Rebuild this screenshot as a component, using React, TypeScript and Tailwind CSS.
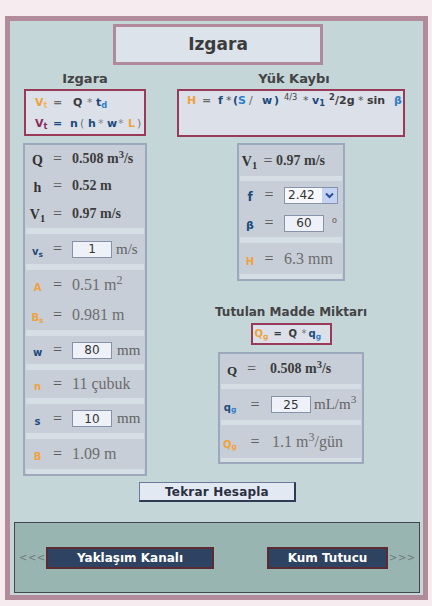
import React from "react";

const SANS = "font-['DejaVu_Sans',Verdana,sans-serif]";
const SERIF = "font-['Liberation_Serif','Times_New_Roman',serif]";

const ORANGE = "text-[#efa23b]";
const NAVY = "text-[#1d4a7b]";
const SKY = "text-[#2f7dc6]";
const MAROON = "text-[#8a2b55]";
const DARK = "text-[#3a3a3a]";

const EQ = `${SERIF} text-[16px] text-[#5c5c5c]`;
const BOLDLBL = `${SERIF} text-[14px] font-bold text-[#333333]`;
const BOLDVAL = `${SERIF} text-[14px] font-bold text-[#3d3d3d]`;
const VAL = `${SERIF} text-[16px] text-[#6c6c6c]`;
const UNIT = `${SERIF} text-[15px] text-[#626262]`;
const OLBL = `${SANS} text-[10px] font-bold text-[#efa23b]`;
const NLBL = `${SANS} text-[10px] font-bold text-[#1d4a7b]`;

type Kids = { children?: React.ReactNode };

// Fixed-width token used inside the formula boxes
function T({ w, className, children }: { w: string; className?: string } & Kids) {
  return <span className={`inline-block ${w} ${className ?? ""}`}>{children}</span>;
}

function Panel({ className, children }: { className?: string } & Kids) {
  return <div className={`border-2 border-[#9ca8bb] bg-[#c8ced8] ${className ?? ""}`}>{children}</div>;
}

function Stripe({ h }: { h: string }) {
  return <div className={`mx-[1px] ${h} bg-[#d6dee5]`} />;
}

function Row({
  h,
  lw,
  ew,
  gap,
  label,
  children,
}: { h: string; lw: string; ew: string; gap: string; label: React.ReactNode } & Kids) {
  return (
    <div className={`flex items-center ${h}`}>
      <span className={`${lw} text-center leading-none`}>{label}</span>
      <span className={`${ew} text-center leading-none ${EQ}`}>=</span>
      <span className={`${gap} flex items-center leading-none whitespace-nowrap`}>{children}</span>
    </div>
  );
}

function LRow({ h, label, children }: { h: string; label: React.ReactNode } & Kids) {
  return (
    <Row h={h} lw="w-[25px]" ew="w-[15px]" gap="ml-[7px]" label={label}>
      {children}
    </Row>
  );
}

function Field({ value }: { value: string }) {
  return (
    <input
      readOnly
      defaultValue={value}
      className={`h-[17px] w-[40px] border border-[#8693aa] bg-[#eef2f8] text-center ${SANS} text-[12px] text-[#333] outline-none`}
    />
  );
}

function Dropdown({ value }: { value: string }) {
  return (
    <div className="flex h-[17px] w-[54px] border border-[#8693aa] bg-[#f6f8fc]">
      <span className={`flex-1 pl-[3px] ${SANS} text-[12px] leading-[15px] text-[#333]`}>{value}</span>
      <span className="flex w-[15px] items-center justify-center bg-[#c3d3f1]">
        <svg width="9" height="7" viewBox="0 0 9 7">
          <path d="M1 1.5 L4.5 5 L8 1.5" fill="none" stroke="#2f4f9c" strokeWidth="2" />
        </svg>
      </span>
    </div>
  );
}

export default function App() {
  return (
    <div className="min-h-[606px] w-[432px] bg-[#f6ecef] px-[5px] pt-[16px] pb-[6px]">
      <div className="w-[423px] border-[5px] border-[#b28b9b] bg-[#c5d6d9] pb-[2px]">
        {/* page heading */}
        <div
          className={`ml-[103px] mt-[3px] flex h-[41px] w-[210px] items-center justify-center border-[3px] border-[#b08a9b] bg-[#dce3ea] ${SANS} text-[17px] font-bold text-[#3b3b3b]`}
        >
          Izgara
        </div>

        <div className="mt-[6px] flex items-start pl-[13px]">
          {/* left column: grate dimensions */}
          <div className="w-[124px]">
            <div className={`h-[16px] text-center ${SANS} text-[13px] font-bold leading-[16px] text-[#444]`}>Izgara</div>
            <div className={`ml-[1px] mt-[2px] h-[47px] w-[122px] border-2 border-[#983a58] bg-[#dbe0e9] pt-[1px] ${SANS} text-[11px] font-bold`}>
              <div className="h-[21px] whitespace-nowrap pl-[9px] leading-[21px]">
                <T w="w-[18px]" className={ORANGE}>
                  V<sub className="text-[#f3b866]">t</sub>
                </T>
                <T w="w-[20px]" className="text-[#6a6a6a]">=</T>
                <T w="w-[14px]" className={DARK}>Q</T>
                <T w="w-[9px]" className="font-normal text-[#777]">*</T>
                <T w="w-[14px]" className={NAVY}>
                  t<sub className={SKY}>d</sub>
                </T>
              </div>
              <div className="h-[21px] whitespace-nowrap pl-[9px] leading-[21px]">
                <T w="w-[18px]" className={MAROON}>
                  V<sub>t</sub>
                </T>
                <T w="w-[17px]" className={NAVY}>=</T>
                <T w="w-[10px]" className={NAVY}>n</T>
                <T w="w-[8px]" className="font-normal text-[#777]">(</T>
                <T w="w-[10px]" className={NAVY}>h</T>
                <T w="w-[9px]" className="font-normal text-[#888]">*</T>
                <T w="w-[11px]" className={NAVY}>w</T>
                <T w="w-[10px]" className="font-normal text-[#888]">*</T>
                <T w="w-[9px]" className={ORANGE}>L</T>
                <T w="w-[5px]" className="font-normal text-[#777]">)</T>
              </div>
            </div>

            <Panel className="mt-[7px] w-[124px]">
              <LRow h="h-[28px]" label={<span className={BOLDLBL}>Q</span>}>
                <span className={BOLDVAL}>
                  0.508 m<sup>3</sup>/s
                </span>
              </LRow>
              <LRow h="h-[26px]" label={<span className={BOLDLBL}>h</span>}>
                <span className={BOLDVAL}>0.52 m</span>
              </LRow>
              <LRow
                h="h-[29px]"
                label={
                  <span className={BOLDLBL}>
                    V<sub>1</sub>
                  </span>
                }
              >
                <span className={BOLDVAL}>0.97 m/s</span>
              </LRow>
              <Stripe h="h-[6px]" />
              <LRow
                h="h-[30px]"
                label={
                  <span className={NLBL}>
                    v<sub>s</sub>
                  </span>
                }
              >
                <Field value="1" />
                <span className={`ml-[4px] ${UNIT}`}>m/s</span>
              </LRow>
              <Stripe h="h-[6px]" />
              <LRow h="h-[30px]" label={<span className={OLBL}>A</span>}>
                <span className={VAL}>
                  0.51 m<sup>2</sup>
                </span>
              </LRow>
              <LRow
                h="h-[30px]"
                label={
                  <span className={OLBL}>
                    B<sub>s</sub>
                  </span>
                }
              >
                <span className={VAL}>0.981 m</span>
              </LRow>
              <Stripe h="h-[6px]" />
              <LRow h="h-[28px]" label={<span className={NLBL}>w</span>}>
                <Field value="80" />
                <span className={`ml-[5px] ${UNIT}`}>mm</span>
              </LRow>
              <Stripe h="h-[6px]" />
              <LRow h="h-[28px]" label={<span className={OLBL}>n</span>}>
                <span className={VAL}>11 çubuk</span>
              </LRow>
              <Stripe h="h-[6px]" />
              <LRow h="h-[29px]" label={<span className={NLBL}>s</span>}>
                <Field value="10" />
                <span className={`ml-[5px] ${UNIT}`}>mm</span>
              </LRow>
              <Stripe h="h-[6px]" />
              <LRow h="h-[30px]" label={<span className={OLBL}>B</span>}>
                <span className={VAL}>1.09 m</span>
              </LRow>
              <Stripe h="h-[5px]" />
            </Panel>
          </div>

          {/* right column: head loss and retained material */}
          <div className="ml-[30px] flex w-[228px] flex-col items-center">
            <div className={`h-[16px] pl-[6px] text-center ${SANS} text-[13px] font-bold leading-[16px] text-[#444]`}>Yük Kaybı</div>
            <div className={`mt-[2px] h-[48px] w-[228px] border-2 border-[#983a58] bg-[#dbe0e9] ${SANS} text-[11px] font-bold`}>
              <div className="h-[20px] whitespace-nowrap pl-[8px] leading-[20px]">
                <T w="w-[15px]" className={ORANGE}>H</T>
                <T w="w-[16px]" className="text-[#6a6a6a]">=</T>
                <T w="w-[8px]" className={NAVY}>f</T>
                <T w="w-[7px]" className="font-normal text-[#555]">*</T>
                <T w="w-[5px]" className={NAVY}>(</T>
                <T w="w-[11px]" className={SKY}>S</T>
                <T w="w-[13px]" className="font-normal text-[#666]">/</T>
                <T w="w-[12px]" className={NAVY}>w</T>
                <T w="w-[10px]" className={NAVY}>)</T>
                <T w="w-[19px]" className="font-normal text-[#444]">
                  <sup>4/3</sup>
                </T>
                <T w="w-[9px]" className="font-normal text-[#555]">*</T>
                <T w="w-[17px]" className={NAVY}>
                  v<sub>1</sub>
                </T>
                <T w="w-[6px]" className={DARK}>
                  <sup>2</sup>
                </T>
                <T w="w-[23px]" className={DARK}>/2g</T>
                <T w="w-[9px]" className="font-normal text-[#555]">*</T>
                <T w="w-[27px]" className={DARK}>sin</T>
                <T w="w-[10px]" className={SKY}>β</T>
              </div>
            </div>

            <Panel className="mt-[6px] w-[108px]">
              <Row
                h="h-[31px]"
                lw="w-[21px]"
                ew="w-[16px]"
                gap="ml-0"
                label={
                  <span className={BOLDLBL}>
                    V<sub>1</sub>
                  </span>
                }
              >
                <span className={BOLDVAL}>0.97 m/s</span>
              </Row>
              <Stripe h="h-[5px]" />
              <Row h="h-[28px]" lw="w-[22px]" ew="w-[16px]" gap="ml-[7px]" label={<span className={`${SANS} text-[12px] font-bold ${NAVY}`}>f</span>}>
                <Dropdown value="2.42" />
              </Row>
              <Row h="h-[28px]" lw="w-[22px]" ew="w-[16px]" gap="ml-[7px]" label={<span className={`${SANS} text-[11px] font-bold ${NAVY}`}>β</span>}>
                <Field value="60" />
                <span className={`ml-[8px] ${SERIF} text-[13px] text-[#555]`}>
                  <sup>o</sup>
                </span>
              </Row>
              <Stripe h="h-[6px]" />
              <Row h="h-[31px]" lw="w-[22px]" ew="w-[16px]" gap="ml-[7px]" label={<span className={OLBL}>H</span>}>
                <span className={VAL}>6.3 mm</span>
              </Row>
              <Stripe h="h-[5px]" />
            </Panel>

            <div className={`mt-[23px] h-[16px] text-center ${SANS} text-[12px] font-bold leading-[16px] text-[#444]`}>Tutulan Madde Miktarı</div>
            <div className={`mt-[3px] h-[22px] w-[81px] border-2 border-[#983a58] bg-[#dbe0e9] ${SANS} text-[10px] font-bold`}>
              <div className="h-[18px] whitespace-nowrap pl-[2px] leading-[18px]">
                <T w="w-[19px]" className={ORANGE}>
                  Q<sub>g</sub>
                </T>
                <T w="w-[15px]" className={DARK}>=</T>
                <T w="w-[13px]" className={DARK}>Q</T>
                <T w="w-[7px]" className="font-normal text-[#777]">*</T>
                <T w="w-[16px]" className={NAVY}>
                  q<sub className={SKY}>g</sub>
                </T>
              </div>
            </div>

            <Panel className="mt-[7px] w-[146px]">
              <Row h="h-[30px]" lw="w-[24px]" ew="w-[15px]" gap="ml-[11px]" label={<span className={`${SERIF} text-[13px] font-bold text-[#333]`}>Q</span>}>
                <span className={BOLDVAL}>
                  0.508 m<sup>3</sup>/s
                </span>
              </Row>
              <Stripe h="h-[5px]" />
              <Row
                h="h-[31px]"
                lw="w-[20px]"
                ew="w-[30px]"
                gap="ml-[1px]"
                label={
                  <span className={NLBL}>
                    q<sub className={SKY}>g</sub>
                  </span>
                }
              >
                <Field value="25" />
                <span className={`ml-[3px] ${UNIT}`}>
                  mL/m<sup>3</sup>
                </span>
              </Row>
              <Stripe h="h-[5px]" />
              <Row
                h="h-[33px]"
                lw="w-[20px]"
                ew="w-[30px]"
                gap="ml-[2px]"
                label={
                  <span className={OLBL}>
                    Q<sub>g</sub>
                  </span>
                }
              >
                <span className={VAL}>
                  1.1 m<sup>3</sup>/gün
                </span>
              </Row>
              <Stripe h="h-[4px]" />
            </Panel>
          </div>
        </div>

        {/* recalculate */}
        <button
          className={`ml-[129px] mt-[6px] block h-[20px] w-[157px] border border-b-2 border-r-2 border-[#6c7a9c] border-b-[#2f3a55] border-r-[#2f3a55] bg-[#e3e9f3] ${SANS} text-[12px] font-bold tracking-[0.2px] text-[#2b3040]`}
        >
          Tekrar Hesapla
        </button>

        {/* navigation between calculation pages */}
        <div className="ml-[4px] mt-[20px] flex h-[71px] w-[406px] items-center border-[1.5px] border-[#40464c] bg-[#99b5b1] pl-[4px] pr-[4px]">
          <span className={`w-[27px] ${SANS} text-[10px] tracking-[0.5px] text-[#6f7b7a]`}>&lt;&lt;&lt;</span>
          <button className={`h-[22px] w-[168px] border-2 border-[#5b2a33] bg-[#2e4361] ${SANS} text-[12px] font-bold text-white`}>
            Yaklaşım Kanalı
          </button>
          <button className={`ml-auto h-[22px] w-[121px] border-2 border-[#5b2a33] bg-[#2e4361] ${SANS} text-[12px] font-bold text-white`}>
            Kum Tutucu
          </button>
          <span className={`w-[27px] pl-[1px] ${SANS} text-[10px] tracking-[0.5px] text-[#6f7b7a]`}>&gt;&gt;&gt;</span>
        </div>
      </div>
    </div>
  );
}
